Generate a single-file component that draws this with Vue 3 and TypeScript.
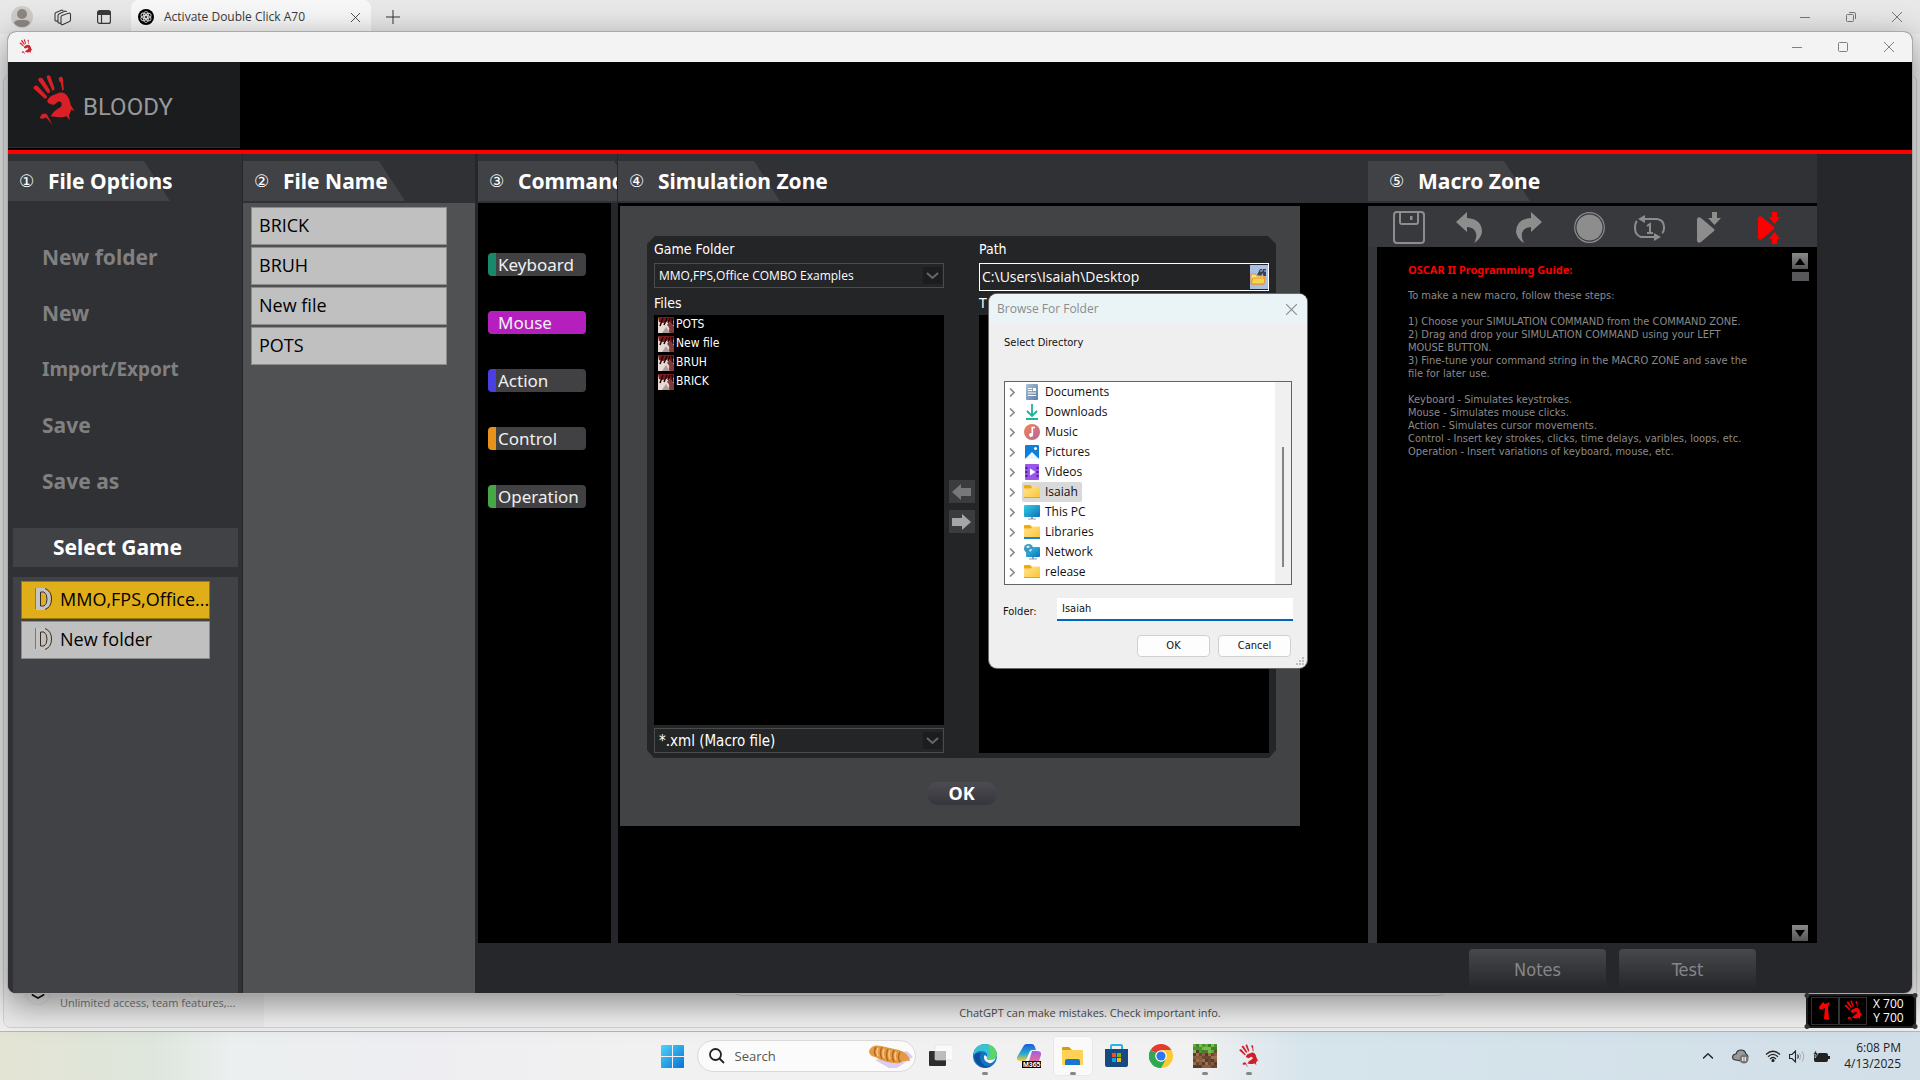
<script setup lang="ts">
import { ref } from 'vue'

interface FileAction { label: string; small?: boolean }
interface Command { label: string; color: string; active?: boolean }
interface TreeNode { label: string; icon: string }

const actions: FileAction[] = [
  { label: 'New folder' },
  { label: 'New' },
  { label: 'Import/Export', small: true },
  { label: 'Save' },
  { label: 'Save as' },
]
const games: string[] = ['MMO,FPS,Office...', 'New folder']
const selectedGame = ref(0)
const files: string[] = ['BRICK', 'BRUH', 'New file', 'POTS']
const folderFiles: string[] = ['POTS', 'New file', 'BRUH', 'BRICK']
const commands: Command[] = [
  { label: 'Keyboard', color: '#168a6b' },
  { label: 'Mouse', color: '#b41fbe', active: true },
  { label: 'Action', color: '#4a3fe0' },
  { label: 'Control', color: '#e8921a' },
  { label: 'Operation', color: '#45a845' },
]
const tree: TreeNode[] = [
  { label: 'Documents', icon: 'doc' },
  { label: 'Downloads', icon: 'down' },
  { label: 'Music', icon: 'music' },
  { label: 'Pictures', icon: 'pic' },
  { label: 'Videos', icon: 'video' },
  { label: 'Isaiah', icon: 'folder' },
  { label: 'This PC', icon: 'pc' },
  { label: 'Libraries', icon: 'library' },
  { label: 'Network', icon: 'network' },
  { label: 'release', icon: 'folder' },
]
const selectedNode = ref('Isaiah')
const gameFolder = ref('MMO,FPS,Office COMBO Examples')
const fileType = ref('*.xml (Macro file)')
const path = ref('C:\\Users\\Isaiah\\Desktop')
const guide = `
To make a new macro, follow these steps:

1) Choose your SIMULATION COMMAND from the COMMAND ZONE.
2) Drag and drop your SIMULATION COMMAND using your LEFT
MOUSE BUTTON.
3) Fine-tune your command string in the MACRO ZONE and save the
file for later use.

Keyboard - Simulates keystrokes.
Mouse - Simulates mouse clicks.
Action - Simulates cursor movements.
Control - Insert key strokes, clicks, time delays, varibles, loops, etc.
Operation - Insert variations of keyboard, mouse, etc.`

const grass: string[] = ['#5fae3a', '#4d9430', '#72c24a', '#3f8028']
const dirt: string[] = ['#8a5f41', '#6d4830', '#9b7050', '#5c3c28']
const blocks = Array.from({ length: 64 }, (_, i) => {
  const x = i % 8
  const y = Math.floor(i / 8)
  const set = y < 2 || (y === 2 && x % 3 !== 1) ? grass : dirt
  return { x, y, fill: set[(x * 7 + y * 5 + ((x * y) % 3)) % 4] }
})
</script>

<template>
  <div class="desktop">
    <svg class="defs" aria-hidden="true">
      <symbol id="hand" viewBox="98 222 124 152">
        <path d="M99 263Q100 253 111 256L139 287Q140 294 133 294ZM113 239Q115 229 126 234L148 269Q149 279 141 277ZM138 231Q140 222 149 227L161 262Q162 271 155 270ZM174 235Q175 227 184 230Q188 236 187 248L189 267Q186 272 184 267L180 246Q174 243 174 235Z" />
        <path d="M140 300Q148 284 167 280Q184 271 195 281Q206 292 209 312L221 331L211 326Q208 336 204 342L207 358L197 346Q184 351 168 348L150 346Q156 333 171 324Q188 318 181 305Q174 299 165 308Q158 315 149 309Q141 309 140 300ZM118 351Q122 338 134 338Q142 341 143 348L155 371L137 350Q126 356 118 351Z" />
      </symbol>
      <symbol id="x" viewBox="0 0 10 10"><path d="M0 0L10 10M10 0L0 10" fill="none" stroke="currentColor" /></symbol>
      <linearGradient id="gFolder" x1="0" y1="0" x2="1" y2="1"><stop offset="0" stop-color="#ffe59b" /><stop offset="1" stop-color="#fcc42f" /></linearGradient>
      <linearGradient id="gBlue" x1="0" y1="0" x2="1" y2="1"><stop offset="0" stop-color="#36d0e0" /><stop offset="1" stop-color="#0a6fc2" /></linearGradient>
      <linearGradient id="gMusic" x1="0" y1="0" x2="1" y2="1"><stop offset="0" stop-color="#f08a52" /><stop offset="1" stop-color="#b8609f" /></linearGradient>
      <linearGradient id="gDoc" x1="0" y1="0" x2="1" y2="1"><stop offset="0" stop-color="#a9c1d8" /><stop offset="1" stop-color="#5f7ea3" /></linearGradient>
      <linearGradient id="gWin" x1="0" y1="0" x2="1" y2="1"><stop offset="0" stop-color="#4fd3fb" /><stop offset="1" stop-color="#0873d3" /></linearGradient>
      <linearGradient id="gCopA" x1="0" y1="0" x2="0" y2="1"><stop offset="0" stop-color="#1a5fd6" /><stop offset=".55" stop-color="#27a6d8" /><stop offset="1" stop-color="#f2d02c" /></linearGradient>
      <linearGradient id="gCopB" x1="0" y1="0" x2="0" y2="1"><stop offset="0" stop-color="#a25be6" /><stop offset="1" stop-color="#f0708e" /></linearGradient>
    </svg>

    <header class="tabs">
      <div class="tabs-left">
        <button class="flat avatar" aria-label="Profile">
          <svg width="22" height="22" viewBox="0 0 22 22"><circle cx="11" cy="11" r="11" fill="#cfccc8" /><circle cx="11" cy="8" r="5" fill="#8d8782" /><path d="M3 17Q4 14 8 14H14Q18 14 19 17Q16 21 11 21Q6 21 3 17Z" fill="#8d8782" /></svg>
        </button>
        <button class="flat" aria-label="Workspaces">
          <svg width="18" height="17" viewBox="0 0 18 17" fill="none" stroke="#3b3b3b" stroke-width="1.1"><path d="M1 11V5Q1 4 2 3.500L8 1Q9 1 9 2M4 13V6.500Q4 5.500 5 5L11 2Q12.500 2 12.500 3M7 8Q7 7 8 6.500L15 4Q16.500 4 16.500 5V11Q16.500 12 15.500 12.500L9 15.500Q7 16 7 14.500ZM1 11Q1 12.500 3.500 12M4 13Q4 14.500 6.500 14" /></svg>
        </button>
        <button class="flat" aria-label="Tab actions">
          <svg width="14" height="14" viewBox="0 0 14 14" fill="none" stroke="#3b3b3b" stroke-width="1.2"><rect x=".6" y=".6" width="12.800" height="12.800" rx="2" /><path d="M1 4.500H13M4.500 4.500V13" /><path d="M1 2.500H13" stroke-width="3" /></svg>
        </button>
      </div>
      <div class="tab">
        <svg width="16" height="16" viewBox="0 0 16 16"><circle cx="8" cy="8" r="8" fill="#000" /><g fill="none" stroke="#ddd" stroke-width=".9"><ellipse cx="8" cy="6" rx="2.500" ry="3.500" /><ellipse cx="8" cy="6" rx="2.500" ry="3.500" transform="rotate(60 8 8)" /><ellipse cx="8" cy="6" rx="2.500" ry="3.500" transform="rotate(120 8 8)" /><ellipse cx="8" cy="6" rx="2.500" ry="3.500" transform="rotate(180 8 8)" /><ellipse cx="8" cy="6" rx="2.500" ry="3.500" transform="rotate(240 8 8)" /><ellipse cx="8" cy="6" rx="2.500" ry="3.500" transform="rotate(300 8 8)" /></g></svg>
        <span>Activate Double Click A70</span>
        <button class="flat" aria-label="Close tab"><svg width="9" height="9"><use href="#x" /></svg></button>
      </div>
      <button class="flat plus" aria-label="New tab"><svg width="14" height="14"><path d="M7 0V14M0 7H14" stroke="#333" /></svg></button>
      <div class="caption">
        <button class="flat" aria-label="Minimize browser"><svg width="10" height="10"><path d="M0 5.500H10" stroke="currentColor" /></svg></button>
        <button class="flat" aria-label="Restore browser"><svg width="10" height="10" fill="none" stroke="currentColor"><rect x=".5" y="2.500" width="7" height="7" rx="1" /><path d="M3 .5H8Q9.500 .5 9.500 2V7" /></svg></button>
        <button class="flat" aria-label="Close browser"><svg width="10" height="10"><use href="#x" /></svg></button>
      </div>
    </header>

    <div class="page">
      <div class="page-card">
        <div class="side">
          <span class="plan-icon"><svg width="14" height="14" viewBox="0 0 14 14" fill="none" stroke="#111" stroke-width="1.600"><path d="M7 1L12.500 4V10L7 13L1.500 10V4Z" /><path d="M7 5V9M5 7H9" /></svg></span>
          <span class="plan">Unlimited access, team features,...</span>
        </div>
        <div class="chat">
          <div class="composer"></div>
          <p>ChatGPT can make mistakes. Check important info.</p>
        </div>
      </div>
    </div>

    <main class="window">
      <div class="titlebar">
        <svg class="mini-hand" width="14" height="16" fill="#c9252d"><use href="#hand" /></svg>
        <div class="caption">
          <button class="flat" aria-label="Minimize"><svg width="10" height="10"><path d="M0 5.500H10" stroke="currentColor" /></svg></button>
          <button class="flat" aria-label="Maximize"><svg width="10" height="10" fill="none" stroke="currentColor"><rect x=".5" y=".5" width="9" height="9" rx="1" /></svg></button>
          <button class="flat" aria-label="Close"><svg width="10" height="10"><use href="#x" /></svg></button>
        </div>
      </div>
      <div class="banner">
        <div class="brand">
          <svg width="42" height="52" fill="#da2026"><use href="#hand" /></svg>
          <span>BLOODY</span>
        </div>
      </div>

      <div class="zones">
        <section class="options">
          <h2 class="head"><i>①</i><span>File Options</span></h2>
          <div class="menu">
            <button v-for="a in actions" :key="a.label" class="flat" :class="{ small: a.small }">{{ a.label }}</button>
          </div>
          <h2 class="band">Select Game</h2>
          <div class="games">
            <button v-for="(g, i) in games" :key="g" class="item" :class="{ on: i === selectedGame }" @click="selectedGame = i">
              <svg width="18" height="22" viewBox="0 0 18 22"><rect x="1" width="10" height="22" fill="#c4c4c4" /><path d="M5 1H10Q16 3 16 11Q16 19 10 21H5Z" fill="#c4c4c4" /><path d="M.5 0V21" stroke="#5f8580" /><path d="M5.500 4V18H9Q12 16 12 11Q12 6 9 4ZM10 .5Q16.500 3 16.500 11Q16.500 19 10 21.500" fill="none" stroke="#3a2a20" /><path d="M6 5H8Q11 7 11 11Q11 15 8 17H6Z" class="hole" /></svg>
              <span>{{ g }}</span>
            </button>
          </div>
        </section>

        <section class="names">
          <h2 class="head"><i>②</i><span>File Name</span></h2>
          <div class="name-list">
            <button v-for="f in files" :key="f" class="item">{{ f }}</button>
          </div>
        </section>

        <div class="work">
          <div class="work-row">
            <section class="commands">
              <h2 class="head"><i>③</i><span>Command Zone</span></h2>
              <div class="cmd-list">
                <button v-for="c in commands" :key="c.label" class="cmd" :class="{ active: c.active }" :style="{ borderLeftColor: c.color }">{{ c.label }}</button>
              </div>
            </section>

            <section class="sim">
              <h2 class="head"><i>④</i><span>Simulation Zone</span></h2>
              <div class="sim-body">
                <div class="sim-panel">
                  <div class="transfer">
                    <div class="side-col">
                      <label for="game-folder">Game Folder</label>
                      <div class="combo">
                        <select id="game-folder" v-model="gameFolder"><option>MMO,FPS,Office COMBO Examples</option></select>
                        <svg width="19" height="17"><path d="M4 6L9.500 11L15 6" fill="none" stroke="#67686a" stroke-width="2" /></svg>
                      </div>
                      <label id="files-label" class="second">Files</label>
                      <ul class="files" aria-labelledby="files-label">
                        <li v-for="f in folderFiles" :key="f">
                          <svg width="16" height="16" viewBox="0 0 16 16"><rect width="16" height="16" fill="#e6dad8" /><path d="M0 0H16V3L13 8L11 4L8 5L5 6L1 5Z" fill="#7c1a1c" /><path d="M5 1L2 9M9 1L6 8M12 1L10 6M14 1L15 8" stroke="#1c0608" stroke-width="1.500" /><path d="M11 5L16 9V16H10Q13 11 9 8Z" fill="#7f3a3b" /><path d="M4 16L8 10L12 16Z" fill="#b09a98" /></svg>
                          {{ f }}
                        </li>
                      </ul>
                      <div class="combo big">
                        <select v-model="fileType" aria-label="File type"><option>*.xml (Macro file)</option></select>
                        <svg width="19" height="17"><path d="M4 6L9.500 11L15 6" fill="none" stroke="#67686a" stroke-width="2" /></svg>
                      </div>
                    </div>
                    <div class="arrows">
                      <button aria-label="Move left"><svg width="19" height="16"><path d="M0 8L9 0V4H19V12H9V16Z" fill="#77787a" /></svg></button>
                      <button aria-label="Move right"><svg width="19" height="16"><path d="M19 8L10 0V4H0V12H10V16Z" fill="#a5a6a8" /></svg></button>
                    </div>
                    <div class="side-col">
                      <label for="path">Path</label>
                      <div class="path">
                        <input id="path" v-model="path" type="text" />
                        <button aria-label="Browse"><svg width="17" height="18" viewBox="0 0 17 18"><path d="M7 7L10 1H12V4L13 1H16V8H13V5L11 8Z" fill="#3d4248" /><path d="M10 3H12M14 3H16" stroke="#b9c6dc" /><path d="M1 6H5L7 8H14V16H1Z" fill="#f7e27c" stroke="#ea8f33" /><path d="M3 10H15L14 16H1Z" fill="#f0d74e" stroke="#ea8f33" /></svg></button>
                      </div>
                      <label id="target-label" class="second">T</label>
                      <ul class="files" aria-labelledby="target-label"></ul>
                    </div>
                  </div>
                  <button class="ok">OK</button>
                </div>
              </div>
            </section>

            <section class="macro">
              <h2 class="head"><i>⑤</i><span>Macro Zone</span></h2>
              <div class="toolbar">
                <button class="flat" aria-label="Save macro"><svg width="32" height="33" viewBox="0 0 32 33" fill="none" stroke="#8d8d8d" stroke-width="2"><rect x="1" y="1" width="30" height="31" rx="3" /><path d="M7 1V11Q7 13 9 13H23Q25 13 25 11V1" /><rect x="17" y="5" width="2.500" height="4" fill="#8d8d8d" stroke="none" /></svg></button>
                <button class="flat" aria-label="Undo"><svg width="26" height="31" viewBox="0 0 26 31" fill="#8d8d8d"><path d="M0 10L11 0V6Q26 7 26 20Q25 27 18 31Q21 26 20 21Q18 15 11 15V20Z" /></svg></button>
                <button class="flat" aria-label="Redo"><svg width="26" height="31" viewBox="0 0 26 31" fill="#8d8d8d"><path d="M26 10L15 0V6Q0 7 0 20Q1 27 8 31Q5 26 6 21Q8 15 15 15V20Z" /></svg></button>
                <button class="flat" aria-label="Record"><svg width="31" height="31" viewBox="0 0 31 31"><circle cx="15.500" cy="15.500" r="14.800" fill="none" stroke="#8d8d8d" stroke-width="1.200" /><circle cx="15.500" cy="15.500" r="13" fill="#8d8d8d" /></svg></button>
                <button class="flat" aria-label="Repeat once"><svg width="33" height="26" viewBox="0 0 33 26" fill="none" stroke="#8d8d8d" stroke-width="2"><path d="M11 4H24Q31 5 31 12Q31 17 29 18M22 22H8Q2 20 2 13Q2 8 4 6" /><path d="M12 0V8L5 4ZM21 18V26L28 22Z" fill="#8d8d8d" stroke="none" /><path d="M14 11L17 9V18M14 18H20" /></svg></button>
                <button class="flat" aria-label="Play down"><svg width="24" height="31" viewBox="0 0 24 31" fill="#8d8d8d"><path d="M0 7Q1 4 4 6L17 17Q18 18 17 19L4 30Q1 32 0 29Z" /><path d="M15 0H20V6H24L17.500 13L11 6H15Z" /></svg></button>
                <button class="flat" aria-label="Play down and up"><svg width="22" height="32" viewBox="0 0 22 32" fill="#f00"><path d="M0 6Q1 3 4 5L16 15Q17 16 16 17L4 27Q1 29 0 26Z" /><path d="M14 0H19V5H22L16.500 12L11 5H14ZM14 32H19V27H22L16.500 20L11 27H14Z" /></svg></button>
              </div>
              <div class="macro-body">
                <div class="guide"><strong>OSCAR II Programming Guide:</strong><pre>{{ guide }}</pre></div>
                <div class="scroller">
                  <button aria-label="Scroll up"><svg width="10" height="7"><path d="M5 0L10 7H0Z" /></svg></button>
                  <span class="thumb"></span>
                  <button class="down" aria-label="Scroll down"><svg width="10" height="7"><path d="M5 7L10 0H0Z" /></svg></button>
                </div>
              </div>
            </section>
          </div>
          <div class="foot">
            <button>Notes</button>
            <button>Test</button>
          </div>
        </div>
      </div>
    </main>

    <section class="dialog" role="dialog" aria-label="Browse For Folder">
      <div class="dialog-title">
        <span>Browse For Folder</span>
        <button class="flat" aria-label="Close dialog"><svg width="11" height="11" viewBox="0 0 10 10"><use href="#x" /></svg></button>
      </div>
      <p>Select Directory</p>
      <div class="tree">
        <ul>
          <li v-for="n in tree" :key="n.label">
            <svg class="chev" width="6" height="9"><path d="M1 .5L5 4.500L1 8.500" fill="none" stroke="#8a8a8a" stroke-width="1.600" /></svg>
            <button class="flat node" :class="{ on: n.label === selectedNode }" @click="selectedNode = n.label">
              <svg width="16" height="16" viewBox="0 0 16 16">
                <template v-if="n.icon === 'doc'"><rect x="2" width="12" height="16" rx="1" fill="url(#gDoc)" /><path d="M4 4.500H8M4 6.500H8M4 9H12M4 11.500H12" stroke="#fff" /><rect x="9" y="4" width="3" height="3" fill="#fff" /></template>
                <template v-else-if="n.icon === 'down'"><path d="M8 0V11M3 7L8 12L13 7" fill="none" stroke="#1fb393" stroke-width="1.800" /><rect x="2" y="14" width="12" height="2" fill="#1fb393" /></template>
                <template v-else-if="n.icon === 'music'"><circle cx="8" cy="8" r="8" fill="url(#gMusic)" /><circle cx="7" cy="11" r="2" fill="#fff" /><path d="M8.300 11V3.500H11" fill="none" stroke="#fff" stroke-width="1.600" /></template>
                <template v-else-if="n.icon === 'pic'"><rect x="1" y="1" width="14" height="14" rx="1" fill="#0f7fd8" /><path d="M1 15L8 8L15 15Z" fill="#e8f6ff" /><circle cx="11.500" cy="4.500" r="1.500" fill="#fff" /></template>
                <template v-else-if="n.icon === 'video'"><rect x="1" y="0" width="14" height="16" rx="1" fill="#9a55ea" /><path d="M2.500 3V14M13.500 3V14" stroke="#4b1c96" stroke-width="2" stroke-dasharray="2 2" /><path d="M6 4.500L11.500 8L6 11.500Z" fill="#fff" /></template>
                <template v-else-if="n.icon === 'folder' || n.icon === 'library'"><path d="M0 1.500Q0 1 1 1H6L8 3V6H0Z" fill="#f3a90a" /><path d="M0 4.500H7L8.500 2.500H15.500L16 3V14H0Z" fill="url(#gFolder)" /><rect v-if="n.icon === 'library'" y="13" width="16" height="2" fill="#1684d6" /><rect v-else y="13" width="16" height="1" fill="#dfa526" /></template>
                <template v-else-if="n.icon === 'pc'"><rect y="1" width="16" height="12" rx="1" fill="url(#gBlue)" /><path d="M7 13H9V14.500H12V15.500H4V14.500H7Z" fill="#8f9aa3" /></template>
                <template v-else><rect x="2" y="3" width="14" height="10" rx="1" fill="url(#gBlue)" /><path d="M8 13H10V14.500H13V15.500H5V14.500H8Z" fill="#8f9aa3" /><circle cx="4.500" cy="4.500" r="4.500" fill="#3f97c4" /><path d="M2 3Q4 0 6 3Q4 5 2 3ZM5 6Q8 4 8 6L6 8Z" fill="#cdeaf5" /></template>
              </svg>
              <span>{{ n.label }}</span>
            </button>
          </li>
        </ul>
        <span class="tree-scroll"><i></i></span>
      </div>
      <div class="field">
        <label for="folder">Folder:</label>
        <input id="folder" v-model="selectedNode" type="text" />
      </div>
      <div class="buttons"><button>OK</button><button>Cancel</button></div>
      <svg class="grip" width="9" height="9" fill="#bdbdbd"><path d="M6 0h2v2h-2zM3 3h2v2h-2zM6 3h2v2h-2zM0 6h2v2h-2zM3 6h2v2h-2zM6 6h2v2h-2z" /></svg>
    </section>

    <aside class="badge">
      <span class="cell"><svg width="14" height="20" viewBox="0 0 14 20"><path d="M1 6L5 1L7 3L12 1L10 6L11 19L6 18L7 7L2 9Z" fill="#f00" /></svg></span>
      <span class="cell"><svg width="19" height="22" fill="#f00"><use href="#hand" /></svg></span>
      <span class="xy"><span>X 700</span><span>Y 700</span></span>
    </aside>

    <footer class="taskbar">
      <div class="apps">
        <button class="flat app" aria-label="Start"><svg width="23" height="23" viewBox="0 0 23 23" fill="url(#gWin)"><path d="M1 0H11V11H0V1Q0 0 1 0ZM12 0H22Q23 0 23 1V11H12ZM0 12H11V23H1Q0 23 0 22ZM12 12H23V22Q23 23 22 23H12Z" /></svg></button>
        <label class="search">
          <svg width="16" height="16" viewBox="0 0 16 16" fill="none" stroke="#222" stroke-width="1.800"><circle cx="6.500" cy="6.500" r="5.500" /><path d="M10.500 10.500L15 15" /></svg>
          <input type="text" placeholder="Search" aria-label="Search" />
          <svg width="46" height="24" viewBox="0 0 46 24"><path d="M8 16L40 7L46 13L30 24H22Z" fill="#d9cdf5" /><path d="M2 7Q5 0 14 2L32 6Q42 9 43 17Q36 16 33 19Q20 20 8 13Q2 12 2 7Z" fill="#e39a45" /><path d="M9 3Q6 8 9 12M15 3Q12 9 15 15M21 5Q18 11 21 17M27 6Q24 12 27 18M33 8Q30 13 33 18" fill="none" stroke="#b9661f" stroke-width="1.500" /><path d="M11 4Q9 8 11 12M17 5Q15 9 17 14M23 6Q21 10 23 15M29 8Q27 12 29 16" fill="none" stroke="#f7c77f" stroke-width="1.500" /></svg>
        </label>
        <button class="flat app" aria-label="Task view"><svg width="24" height="24" viewBox="0 0 24 24"><rect x="0" y="7" width="17" height="15" rx="1" fill="#2d2d2d" /><rect x="6" y="1" width="18" height="15" rx="1" fill="#fafafa" stroke="#ddd" stroke-width=".6" /><rect x="6" y="7" width="11" height="9" fill="#bdbdbd" /></svg></button>
        <button class="flat app run" aria-label="Edge"><svg width="24" height="24" viewBox="0 0 24 24"><circle cx="12" cy="12" r="12" fill="#1673c4" /><path d="M1 8Q4 0 12 0Q23 1 24 11Q23 16 17 16Q13 16 14 13Q15 7 8 7Q3 7 1 11Z" fill="#37c3d0" /><path d="M15 .5Q23 2 24 11Q23 16 17 16L14 14Q20 12 15 .5Z" fill="#5fd467" /><path d="M14 13Q13 16 17 16Q21 16 23 14Q20 20 16 19Q10 17 11 12Q12 10 14 13Z" fill="#f0f3f5" /><path d="M8 9Q5 16 10 20Q14 24 19 21Q15 25 9 23Q2 20 1 12Q3 8 8 9Z" fill="#0d4f9f" /></svg></button>
        <button class="flat app" aria-label="Microsoft 365"><svg width="24" height="24" viewBox="0 0 24 24"><path d="M6 3Q7 0 10 0H15Q17 0 18 3L19 6H15Q13 6 12 9L10 14Q9 17 6 17H3Q-1 17 0 13Z" fill="url(#gCopA)" /><path d="M15 7H20Q25 7 24 11L22 17Q21 19 18 19H10Q12 18 13 14Z" fill="url(#gCopB)" /><rect x="5" y="17" width="19" height="7" fill="#000" /><text x="6" y="23" font-size="7" font-weight="700" fill="#fff" font-family="Liberation Sans, sans-serif">M365</text></svg></button>
        <button class="flat app run here" aria-label="File Explorer"><svg width="21" height="20" viewBox="0 0 21 20"><path d="M0 2Q0 1 1 1H7L10 4V9H0Z" fill="#d99b09" /><path d="M0 4H20Q21 4 21 5V18Q21 19 20 19H1Q0 19 0 18Z" fill="#ffd257" /><path d="M3 15Q3 13 5 13H16Q18 13 18 15V19H3Z" fill="#1777cf" /></svg></button>
        <button class="flat app" aria-label="Store"><svg width="23" height="24" viewBox="0 0 23 24"><path d="M6 6V2Q6 1 7 1H16Q17 1 17 2V6" fill="none" stroke="#25b4ec" stroke-width="2" /><path d="M0 5H23V21Q23 23 21 23H2Q0 23 0 21Z" fill="#174a80" /><path d="M7 9H11V13H7Z" fill="#f25022" /><path d="M12 9H16V13H12Z" fill="#7fba00" /><path d="M7 14H11V18H7Z" fill="#00a4ef" /><path d="M12 14H16V18H12Z" fill="#ffb900" /></svg></button>
        <button class="flat app" aria-label="Chrome"><svg width="24" height="24" viewBox="0 0 24 24"><path d="M12 12L1.600 6A12 12 0 0 1 22.400 6Z" fill="#e33b2e" /><path d="M12 12L22.400 6A12 12 0 0 1 12 24Z" fill="#fcc934" /><path d="M12 12V24A12 12 0 0 1 1.600 6Z" fill="#2da94f" /><path d="M12 6H22.400L17 15Z" fill="#fcc934" /><path d="M1.600 6L7 15L12 18L17 15L12 24A12 12 0 0 1 1.600 6Z" fill="#2da94f" /><circle cx="12" cy="12" r="5.800" fill="#fff" /><circle cx="12" cy="12" r="4.600" fill="#3076e8" /></svg></button>
        <button class="flat app run" aria-label="Minecraft"><svg width="24" height="24" viewBox="0 0 8 8" shape-rendering="crispEdges"><rect v-for="(b, i) in blocks" :key="i" :x="b.x" :y="b.y" width="1" height="1" :fill="b.fill" /></svg></button>
        <button class="flat app run" aria-label="Bloody"><svg width="22" height="24" fill="#cf1f2a"><use href="#hand" /></svg></button>
      </div>
      <div class="tray">
        <svg width="10" height="6"><path d="M0 5.500L5 .8L10 5.500" fill="none" stroke="#222" stroke-width="1.400" /></svg>
        <svg class="cloud" width="17" height="15" viewBox="0 0 17 15"><path d="M4 11Q0 11 .8 7Q1.500 5 4 5Q5 1 9 1Q13 1 14 5Q16 6 16 8L10 12Z" fill="#999" stroke="#333" stroke-width="1.200" /><circle cx="12" cy="10" r="4.500" fill="#777" /><path d="M10.800 8V12M13.200 8V12" stroke="#fff" stroke-width="1.200" /></svg>
        <svg class="wifi" width="16" height="12" viewBox="0 0 16 12" fill="none" stroke="#222" stroke-width="1.200"><path d="M1 4.500Q8 -2 15 4.500M3 6.800Q8 2 13 6.800M5 9Q8 6 11 9" /><circle cx="8" cy="10.500" r="1" fill="#222" /></svg>
        <svg class="vol" width="16" height="13" viewBox="0 0 16 13" fill="none" stroke="#222"><path d="M.5 4.500H3L6.500 1V12L3 8.500H.5ZM8.500 4.500Q10 6.500 8.500 8.500" stroke-width="1.100" /><path d="M10.500 3Q13 6.500 10.500 10M13 1.500Q16.500 6.500 13 11.500" stroke="#aaa" /></svg>
        <svg class="bat" width="17" height="12" viewBox="0 0 17 12"><rect x="1.600" y="3.600" width="12.800" height="7.800" rx="1.500" fill="#222" stroke="#222" stroke-width="1.200" /><path d="M15 6H17V9H15Z" fill="#222" /><path d="M3 0L0 4.500H2.500L2 8L5.500 3H3.500Z" fill="#222" stroke="#dce6ec" stroke-width=".6" /></svg>
        <time>6:08 PM<br />4/13/2025</time>
      </div>
    </footer>
  </div>
</template>

<style>
body { margin: 0; }
</style>

<style scoped>
* { box-sizing: border-box; }
.desktop {
  --ui: "Open Sans", "Noto Sans", sans-serif;
  --tahoma: "DejaVu Sans Condensed", "Noto Sans", sans-serif;
  --bold: "Noto Sans", sans-serif;
  position: relative;
  display: flex;
  flex-direction: column;
  min-height: 100vh;
  overflow: hidden;
  background: #efefef;
  font-family: var(--ui);
}
.defs { position: absolute; width: 0; height: 0; }
svg { display: block; flex: none; }
button, input, select { font: inherit; color: inherit; margin: 0; }
.flat { display: flex; align-items: center; justify-content: center; padding: 0; border: 0; background: none; }
h2, p, ul, pre { margin: 0; padding: 0; list-style: none; }

/* browser behind */
.tabs { display: flex; align-items: center; height: 34px; background: #e8e8e8; }
.tabs-left { display: flex; align-items: center; width: 131px; padding-left: 11px; gap: 21px; }
.tabs-left .flat:last-child { margin-left: 4px; }
.tab { display: flex; align-items: center; width: 240px; height: 34px; padding: 0 11px 0 7px; gap: 10px; border-radius: 8px 8px 0 0; background: #f7f7f7; font-size: 12px; line-height: 16px; color: #3a3a3a; }
.tab span { flex: 1; white-space: nowrap; }
.plus { margin-left: 15px; }
.caption { display: flex; gap: 36px; margin-left: auto; padding-right: 18px; color: #777; }
.page { flex: 1; display: flex; padding: 40px 3px 3px; }
.page-card { flex: 1; display: flex; border: 1px solid #d2d2d2; border-radius: 8px; overflow: hidden; background: #f3f3f3; }
.side { display: flex; align-items: flex-end; width: 260px; padding: 0 0 16px 21px; gap: 9px; background: #ececec; font-size: 11px; line-height: 16px; color: #777; white-space: nowrap; }
.plan-icon { display: flex; align-items: center; justify-content: center; width: 26px; height: 26px; margin-bottom: 6px; border: 1px solid #ddd; border-radius: 50%; }
.chat { flex: 1; display: flex; flex-direction: column; align-items: center; justify-content: flex-end; gap: 9px; padding: 0 0 6px; font-size: 11px; line-height: 16px; color: #4d4d4d; }
.composer { width: 740px; height: 100px; border: 1px solid #d0d0d0; border-radius: 24px; background: #fff; }

/* application window */
.window { position: absolute; inset: 32px 8px 87px; display: flex; flex-direction: column; border-radius: 8px; overflow: hidden; background: #26272b; box-shadow: 0 0 0 1px #a9a9a9, 0 10px 34px 2px rgba(0, 0, 0, .42); }
.titlebar { display: flex; align-items: center; height: 30px; padding-left: 11px; background: #f3f3f3; }
.titlebar .caption { color: #808080; }
.banner { display: flex; height: 92px; border-bottom: 4px solid #f00; background: #000; }
.brand { display: flex; align-items: center; width: 232px; height: 86px; padding-left: 25px; gap: 8px; border-bottom: 1px solid #2e2f31; background: #1b1c1e; font: 24px/24px Roboto, sans-serif; color: #97989a; }
.brand svg { margin-bottom: 10px; }
.brand span { padding-top: 5px; }
.zones { flex: 1; display: flex; min-height: 0; }
.head { position: relative; z-index: 0; display: flex; align-items: center; height: 49px; padding: 4px 0 0 11px; overflow: hidden; background: #303135; font: 700 21px/28px var(--bold); color: #fff; white-space: nowrap; }
.head::before { content: ""; position: absolute; z-index: -1; left: 0; top: 7px; width: 162px; height: 40px; background: #414246; clip-path: polygon(0 0, 136px 0, 100% 100%, 0 100%); }
.head i { flex: none; width: 29px; font: 400 17px/20px "DejaVu Sans", sans-serif; }
.head span { min-width: 0; overflow: hidden; }
.options { display: flex; flex-direction: column; width: 235px; background: #303135; border-right: 1px solid #26272b; }
.menu { display: flex; flex-direction: column; align-items: flex-start; gap: 28px; padding: 40px 0 33px 34px; }
.menu .flat { height: 28px; font: 700 21px/28px var(--bold); color: #808080; }
.menu .small { font-size: 19px; }
.band { height: 39px; margin: 0 4px 10px 5px; padding-left: 40px; background: #414246; font: 700 21px/38px var(--bold); color: #fff; }
.games { flex: 1; display: flex; flex-direction: column; gap: 2px; margin: 0 4px 0 5px; padding: 4px 28px 0 8px; background: #414246; }
.item { display: flex; align-items: center; height: 38px; padding: 0 0 2px 7px; border: 1px solid #8b8b8b; background: #c0c0c0; font-size: 18px; line-height: 24px; color: #000; text-align: left; white-space: nowrap; }
.games .item { padding: 0 0 2px 13px; gap: 7px; }
.item.on { border-color: #9a7710; background: #dfae18; }
.hole { fill: #c0c0c0; }
.on .hole { fill: #dfae18; }
.names { display: flex; flex-direction: column; width: 232px; background: #505153; }
.name-list { display: flex; flex-direction: column; gap: 2px; padding: 4px 28px 0 8px; }

.work { flex: 1; display: flex; flex-direction: column; min-width: 0; padding-left: 3px; }
.work-row { flex: 1; display: flex; min-height: 0; padding-right: 95px; }
.commands { display: flex; flex-direction: column; width: 140px; }
.commands .head { border-right: 1px solid #26272b; }
.cmd-list { flex: 1; display: flex; flex-direction: column; gap: 35px; width: 133px; padding: 50px 0 0 10px; background: #000; }
.cmd { width: 98px; height: 23px; padding: 0 0 0 2px; border: 0; border-left: 8px solid; border-radius: 4px; background: #414144; font: 17px/21px var(--bold); color: #f0f0f0; text-align: left; }
.cmd.active { background: #b41fbe; }
.sim { flex: 1; display: flex; flex-direction: column; min-width: 0; background: #000; }
.sim-body { padding: 3px 68px 0 2px; }
.sim-panel { display: flex; flex-direction: column; align-items: center; padding: 30px 24px 21px 27px; gap: 24px; background: #424345; }
.transfer { align-self: stretch; display: grid; grid-template-columns: 1fr 35px 1fr; height: 522px; padding: 3px 7px 5px; background: #242527; clip-path: polygon(8px 0, calc(100% - 8px) 0, 100% 8px, 100% calc(100% - 8px), calc(100% - 7px) 100%, 7px 100%, 0 calc(100% - 8px), 0 8px); font: 14px/20px var(--tahoma); color: #fff; }
.side-col { display: flex; flex-direction: column; min-width: 0; }
.side-col label { height: 20px; margin-bottom: 4px; }
.side-col .second { margin-bottom: 2px; }
.combo { position: relative; height: 25px; margin-bottom: 5px; }
.combo select { width: 100%; height: 25px; padding: 0 0 0 4px; border: 1px solid #4b4c4e; border-radius: 0; appearance: none; background: #242527; font: 12px/20px var(--ui); }
.combo svg { position: absolute; right: 2px; top: 4px; background: #1c1d1f; pointer-events: none; }
.combo.big { margin: 3px 0 0; }
.combo.big select { font: 15px/20px var(--tahoma); }
.files { flex: 1; padding: 1px 4px; background: #000; }
.files li { display: flex; align-items: center; gap: 2px; height: 17px; margin-bottom: 2px; font-size: 12px; line-height: 17px; }
.arrows { display: flex; flex-direction: column; align-items: center; gap: 7px; padding-top: 241px; }
.arrows button { display: flex; align-items: center; justify-content: center; width: 26px; height: 23px; padding: 0; border: 0; background: #3b3c3e; }
.path { display: flex; height: 28px; margin-bottom: 2px; padding: 1px 0 1px 1px; border: 1px solid #fff; }
.path input { flex: 1; min-width: 0; padding: 0 1px; border: 0; outline: 0; background: none; font: 14px/22px var(--ui); }
.path button { display: flex; align-items: center; width: 18px; padding: 0; border: 0; background: #a9c0e4; }
.ok { width: 70px; height: 23px; padding: 0; border: 0; border-radius: 11px; background: linear-gradient(#4d4c54, #36353b); font: 700 18px/23px var(--bold); color: #fff; }

.macro { display: flex; flex-direction: column; width: 449px; background: #000; }
.macro .head { padding-left: 21px; }
.toolbar { display: flex; height: 41px; margin-top: 3px; padding: 2px 0 0 11px; background: #38393d; }
.toolbar .flat { width: 60px; }
.macro-body { flex: 1; display: flex; justify-content: space-between; padding: 6px 8px 2px 31px; border-left: 9px solid #35363a; }
.guide { padding-top: 10px; font: 11px/13px var(--tahoma); color: #8a8a8a; }
.guide strong { display: block; font: 700 11px/13px var(--bold); color: #f00; }
.guide pre { font: inherit; }
.scroller { display: flex; flex-direction: column; gap: 3px; width: 17px; }
.scroller button { display: flex; align-items: center; justify-content: center; width: 16px; height: 16px; padding: 0; border: 0; background: linear-gradient(#8a8a8a, #555); }
.scroller .down { margin-top: auto; }
.thumb { height: 9px; background: #58585a; }
.foot { display: flex; justify-content: flex-end; gap: 13px; height: 50px; padding: 6px 156px 5px 0; }
.foot button { width: 137px; padding: 2px 0 0; border: 0; border-radius: 4px; background: linear-gradient(#47484a, #26272b); font: 18px/36px var(--tahoma); color: #85868a; }

/* folder picker */
.dialog { position: absolute; left: 989px; top: 294px; width: 318px; height: 374px; display: flex; flex-direction: column; border-radius: 8px; background: #efefef; box-shadow: 0 0 0 1px #6a6a6a; font: 12px/20px var(--ui); color: #111; overflow: hidden; }
.dialog-title { display: flex; align-items: center; justify-content: space-between; height: 30px; padding: 0 10px 0 8px; background: #eaf4f7; color: #8b8b8b; }
.dialog p { margin: 9px 0 28px 15px; font: 11px/20px var(--tahoma); }
.tree { display: flex; width: 288px; height: 204px; margin-left: 15px; border: 1px solid #646464; background: #fff; }
.tree ul { flex: 1; }
.tree li { display: flex; align-items: center; height: 20px; padding-left: 4px; }
.node { height: 20px; margin-left: 7px; padding: 0 4px 0 2px; gap: 5px; border-radius: 2px; }
.node.on { background: #d9d9d9; }
.tree-scroll { display: flex; justify-content: center; width: 16px; background: #f0f0f0; }
.tree-scroll i { width: 2px; height: 120px; margin-top: 65px; background: #858585; }
.field { display: flex; align-items: center; height: 23px; margin: 13px 14px 14px; font: 11px/20px var(--tahoma); }
.field label { width: 54px; padding-top: 5px; }
.field input { flex: 1; height: 23px; min-width: 0; padding: 0 5px 1px; border: 0; border-bottom: 2px solid #0067c0; outline: 0; background: #fff; }
.buttons { display: flex; justify-content: flex-end; gap: 8px; padding-right: 16px; font: 11px/16px var(--tahoma); }
.buttons button { width: 73px; height: 22px; padding: 0; border: 1px solid #d0d0d0; border-radius: 4px; background: #fdfdfd; }
.grip { position: absolute; right: 2px; bottom: 2px; }

/* sensitivity badge */
.badge { position: absolute; right: 4px; bottom: 52px; display: flex; align-items: center; width: 110px; height: 34px; padding-left: 3px; border: 2px solid #1d1d1d; background: #000; font: 12px/14px var(--ui); color: #fff; }
.badge::before, .badge::after { content: ""; position: absolute; left: -4px; right: -4px; height: 5px; background: radial-gradient(circle at 3px 50%, #333 2px, transparent 3px), radial-gradient(circle at calc(100% - 3px) 50%, #333 2px, transparent 3px); }
.badge::before { top: -3px; }
.badge::after { bottom: -3px; }
.cell { display: flex; align-items: center; justify-content: center; width: 28px; height: 28px; border: 1px solid #333; }
.xy { display: flex; flex-direction: column; margin-left: 6px; text-align: right; }

/* taskbar */
.taskbar { display: grid; grid-template-columns: 1fr auto 1fr; height: 49px; border-top: 1px solid #b4b6b8; background: linear-gradient(90deg, #e4e4d4 0, #dee6dd 8%, #ebefef 12%, #eeeef2 22%, #f1f1f1 33%, #f1f1f1 62%, #d6e4ec 68%, #d2dfe8 100%); }
.apps { grid-column: 2; display: flex; align-items: center; padding-left: 1px; }
.app { position: relative; width: 44px; height: 38px; }
.run::after { content: ""; position: absolute; left: 19px; bottom: 0; width: 6px; height: 3px; border-radius: 2px; background: #868686; }
.here { width: 38px; margin: 0 3px; border-radius: 4px; background: #fafafa; box-shadow: 0 0 0 1px #e8e8e8; }
.here::after { left: 16px; }
.search { display: flex; align-items: center; width: 219px; height: 32px; margin: 0 3px 0 2px; padding: 0 2px 0 11px; gap: 10px; border: 1px solid #dadada; border-radius: 16px; background: #fbfbfb; }
.search input { flex: 1; min-width: 0; padding: 0; border: 0; outline: 0; background: none; font: 13px/20px var(--ui); }
.search input::placeholder { color: #555; opacity: 1; }
.tray { display: flex; align-items: center; justify-content: flex-end; padding-right: 19px; color: #222; }
.cloud { margin-left: 19px; }
.wifi { margin-left: 16px; }
.vol { margin-left: 8px; }
.bat { margin-left: 8px; }
.tray time { width: 71px; font: 12px/16px var(--ui); text-align: right; }
</style>
